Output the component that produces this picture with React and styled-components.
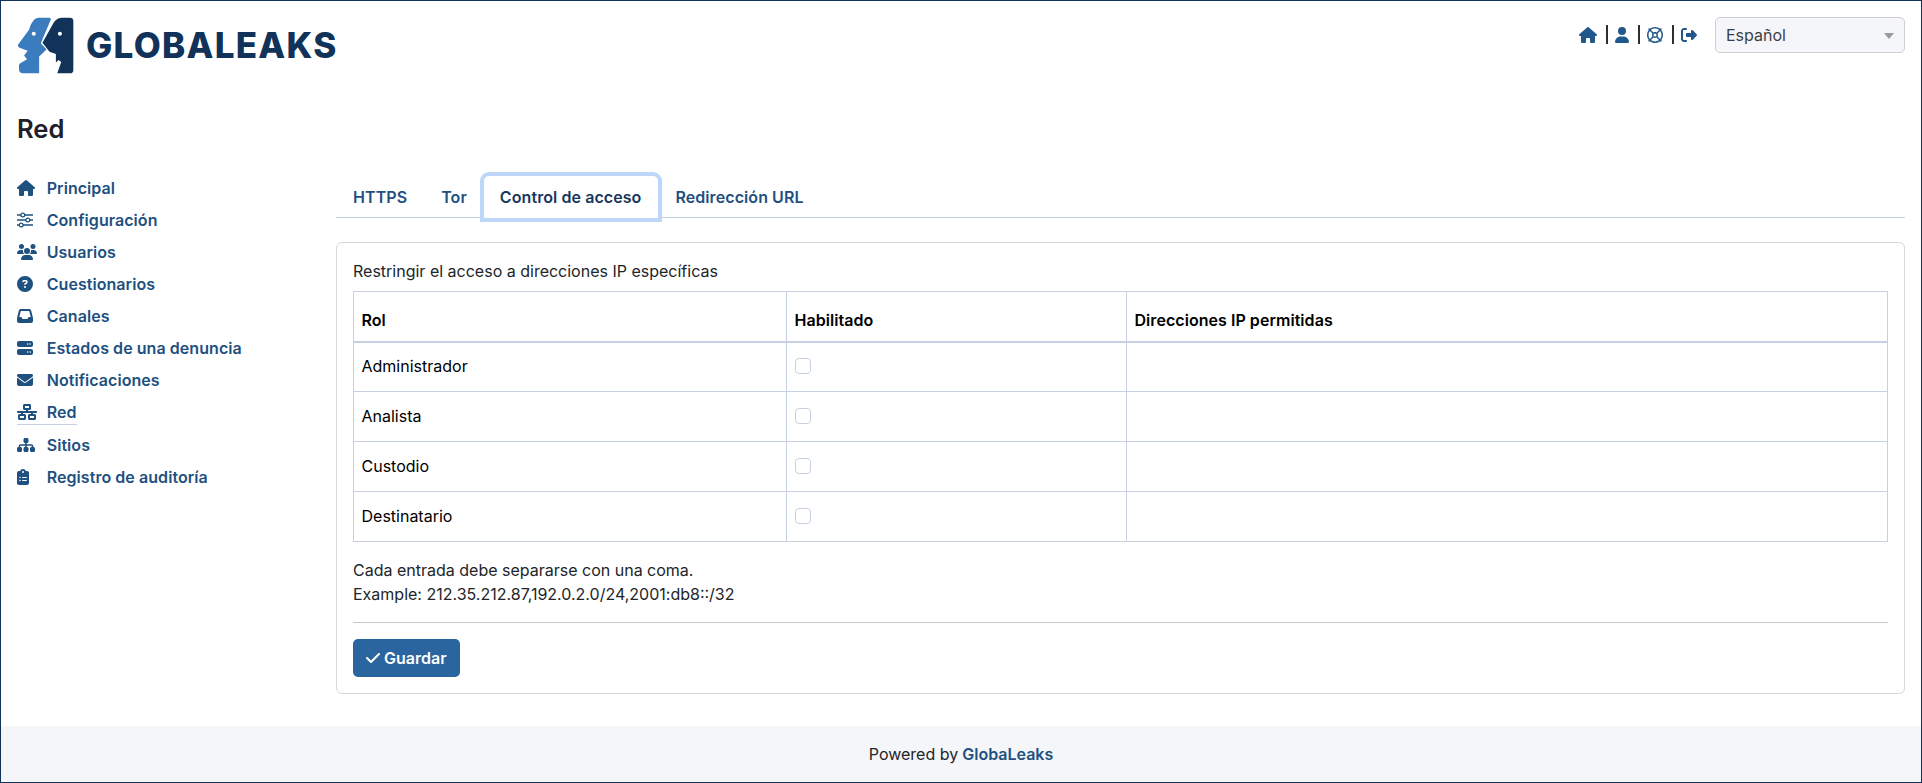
import React from "react";
import styled, { createGlobalStyle } from "styled-components";
import {
  FaHouse,
  FaUser,
  FaRegLifeRing,
  FaRightFromBracket,
  FaUsers,
  FaCircleQuestion,
  FaInbox,
  FaServer,
  FaEnvelope,
  FaNetworkWired,
  FaSitemap,
  FaClipboardList,
  FaCheck,
} from "react-icons/fa6";

const linkColor = "#1e5080";
const lineColor = "#c7d0e2";

function SlidersIcon() {
  return (
    <svg viewBox="0 0 16 16" fill="none" stroke="currentColor">
      <path strokeWidth="1.4" d="M0 3H16M0 8H16M0 13H16" />
      <circle cx="5.8" cy="3" r="1.9" fill="#fff" strokeWidth="1.2" />
      <circle cx="10.8" cy="8" r="1.9" fill="#fff" strokeWidth="1.2" />
      <circle cx="4.2" cy="13" r="1.9" fill="#fff" strokeWidth="1.2" />
    </svg>
  );
}

const navItems = [
  { label: "Principal", icon: FaHouse, width: 18 },
  { label: "Configuración", icon: SlidersIcon, width: 16 },
  { label: "Usuarios", icon: FaUsers, width: 20 },
  { label: "Cuestionarios", icon: FaCircleQuestion, width: 16 },
  { label: "Canales", icon: FaInbox, width: 16 },
  { label: "Estados de una denuncia", icon: FaServer, width: 16 },
  { label: "Notificaciones", icon: FaEnvelope, width: 16 },
  { label: "Red", icon: FaNetworkWired, width: 20, active: true },
  { label: "Sitios", icon: FaSitemap, width: 18 },
  { label: "Registro de auditoría", icon: FaClipboardList, width: 12 },
];

const tabs = ["HTTPS", "Tor", "Control de acceso", "Redirección URL"];
const roles = ["Administrador", "Analista", "Custodio", "Destinatario"];

export default function App() {
  return (
    <Page>
      <GlobalStyle />
      <Header>
        <Brand>
          <Logo />
          <BrandName>GLOBALEAKS</BrandName>
        </Brand>
        <UserBar>
          <UserLink $w={18}><FaHouse /></UserLink>
          <UserLink $w={14}><FaUser /></UserLink>
          <UserLink $w={16}><FaRegLifeRing /></UserLink>
          <UserLink $w={16} $last><FaRightFromBracket /></UserLink>
          <SelectWrap>
            <LangSelect defaultValue="es">
              <option value="es">Español</option>
            </LangSelect>
            <Caret />
          </SelectWrap>
        </UserBar>
      </Header>

      <PageTitle>Red</PageTitle>

      <Body>
        <Sidebar>
          {navItems.map(({ label, icon: Icon, width, active }) => (
            <NavItem key={label}>
              <NavLink $active={active}>
                <NavIcon $w={width}><Icon /></NavIcon>
                {label}
              </NavLink>
            </NavItem>
          ))}
        </Sidebar>

        <Main>
          <Tabs>
            {tabs.map((t) => (
              <Tab key={t} $active={t === "Control de acceso"}>{t}</Tab>
            ))}
          </Tabs>

          <Card>
            <Intro>Restringir el acceso a direcciones IP específicas</Intro>
            <Table>
              <colgroup>
                <col style={{ width: 433 }} />
                <col style={{ width: 340 }} />
                <col />
              </colgroup>
              <thead>
                <tr>
                  <Th>Rol</Th>
                  <Th>Habilitado</Th>
                  <Th>Direcciones IP permitidas</Th>
                </tr>
              </thead>
              <tbody>
                {roles.map((r) => (
                  <tr key={r}>
                    <Td>{r}</Td>
                    <Td><Check type="checkbox" /></Td>
                    <Td />
                  </tr>
                ))}
              </tbody>
            </Table>
            <Help>
              Cada entrada debe separarse con una coma.
              <br />
              Example: 212.35.212.87,192.0.2.0/24,2001:db8::/32
            </Help>
            <Rule />
            <SaveButton>
              <FaCheck />
              Guardar
            </SaveButton>
          </Card>
        </Main>
      </Body>

      <Footer>
        Powered by <FooterLink>GlobaLeaks</FooterLink>
      </Footer>
    </Page>
  );
}

function Logo() {
  return (
    <svg width="57" height="57" viewBox="50 50 170 170">
      <path
        fill="#3a7cbd"
        d="M112 52 H146 Q153 52 150 60 L121 128 L138 147 L116 168 V218 H68 Q56 218 56 206 V194 Q56 189 61 187 L80 176 L71 165 L82 151 L58 142 Q50 137 54 131 L86 88 Q94 56 112 52 Z"
      />
      <path
        fill="#11335a"
        d="M186 52 H208 Q218 52 218 62 V208 Q218 218 208 218 H170 L182 184 L174 178 L166 186 L166 160 L147 154 L126 127 L160 66 Q168 52 186 52 Z"
      />
      <circle cx="100" cy="100" r="6" fill="#fff" />
      <circle cx="178" cy="100" r="6" fill="#fff" />
    </svg>
  );
}

const GlobalStyle = createGlobalStyle`
  html, body {
    margin: 0;
    padding: 0;
    background: #fff;
  }
  body {
    font-family: Inter, "Liberation Sans", sans-serif;
    font-size: 16px;
    line-height: 1.5;
    color: #212529;
  }
  * {
    box-sizing: border-box;
  }
`;

const Page = styled.div`
  display: flex;
  flex-direction: column;
  height: 783px;
  border: 1px solid #11335a;
  overflow: hidden;
`;

const Header = styled.header`
  display: flex;
  justify-content: space-between;
  align-items: flex-start;
  padding: 16px 16px 0 16px;
  height: 110px;
`;

const Brand = styled.div`
  display: flex;
  align-items: center;
  gap: 12px;
`;

const BrandName = styled.span`
  font-size: 35px;
  font-weight: 800;
  line-height: 57px;
  letter-spacing: 1.25px;
  color: #11335a;
`;

const UserBar = styled.div`
  display: flex;
  align-items: center;
  height: 36px;
`;

const UserLink = styled.a`
  display: flex;
  align-items: center;
  height: 19px;
  padding: 0 9px 0 0;
  margin: -1px 7px 0 0;
  color: #22578b;
  border-right: ${(p) => (p.$last ? "none" : "2px solid #2b2f38")};

  svg {
    height: 16px;
    width: ${(p) => p.$w}px;
  }
`;

const SelectWrap = styled.div`
  position: relative;
  margin-left: 2px;
  width: 190px;
`;

const LangSelect = styled.select`
  appearance: none;
  display: block;
  width: 100%;
  height: 36px;
  padding: 0 10px;
  font-family: inherit;
  font-size: 16px;
  color: #3b3f46;
  background: #f5f6fa;
  border: 1px solid #cfcfcf;
  border-radius: 5px;
`;

const Caret = styled.span`
  position: absolute;
  right: 11px;
  top: 16px;
  border-left: 5px solid transparent;
  border-right: 5px solid transparent;
  border-top: 6px solid #9a9a9a;
`;

const PageTitle = styled.h1`
  margin: 0;
  padding: 0 16px;
  font-size: 25.6px;
  font-weight: 600;
  line-height: 36px;
  color: #1f2029;
  height: 61px;
`;

const Body = styled.div`
  display: flex;
  flex: 1;
  padding: 0 16px;
`;

const Sidebar = styled.ul`
  list-style: none;
  margin: 0;
  padding: 0;
  width: 319px;
  flex-shrink: 0;
`;

const NavItem = styled.li`
  display: flex;
  padding: 4px 0;
`;

const NavLink = styled.a`
  display: inline-flex;
  align-items: center;
  font-size: 16px;
  font-weight: 600;
  line-height: 24px;
  letter-spacing: 0.06px;
  color: ${linkColor};
  border-bottom: ${(p) => (p.$active ? `1px solid ${lineColor}` : "none")};
`;

const NavIcon = styled.span`
  display: inline-flex;
  width: 29.7px;

  svg {
    height: 16px;
    width: ${(p) => p.$w}px;
  }
`;

const Main = styled.main`
  flex: 1;
  min-width: 0;
  padding-top: 4px;
`;

const Tabs = styled.nav`
  display: flex;
  height: 42px;
  border-bottom: 1px solid ${lineColor};
`;

const Tab = styled.a`
  display: flex;
  align-items: center;
  height: 42px;
  padding: ${(p) => (p.$active ? "0 17px 0 16px" : "0 17px")};
  font-size: 16px;
  font-weight: 600;
  letter-spacing: 0.08px;
  position: relative;
  color: ${(p) => (p.$active ? "#17375e" : linkColor)};
  ${(p) =>
    p.$active &&
    `
    background: #fff;
    border-radius: 5px 5px 0 0;
    box-shadow: 0 0 0 4px #bfd6fb;
    z-index: 1;
  `}
`;

const Card = styled.section`
  margin-top: 24px;
  padding: 16px;
  border: 1px solid #d5d7db;
  border-radius: 6px;
  display: flex;
  flex-direction: column;
  align-items: flex-start;
`;

const Intro = styled.p`
  margin: 0 0 8px 0;
  line-height: 24px;
`;

const Table = styled.table`
  width: 100%;
  table-layout: fixed;
  border-collapse: collapse;
  color: #000;
`;

const Th = styled.th`
  height: 50px;
  padding: 0 8px 9px 7.5px;
  text-align: left;
  vertical-align: bottom;
  font-weight: 600;
  letter-spacing: 0.05px;
  border: 1px solid ${lineColor};
  border-bottom: 2px solid ${lineColor};
`;

const Td = styled.td`
  height: 50px;
  padding: 0 8px 2px 7.5px;
  border: 1px solid ${lineColor};
  vertical-align: middle;
`;

const Check = styled.input`
  appearance: none;
  display: block;
  width: 16px;
  height: 16px;
  margin: 0;
  border: 1px solid ${lineColor};
  border-radius: 4px;
  background: #fff;
`;

const Help = styled.p`
  margin: 16px 0 0 0;
  line-height: 24px;
`;

const Rule = styled.hr`
  align-self: stretch;
  margin: 16px 0;
  border: 0;
  border-top: 1px solid #c9cacc;
`;

const SaveButton = styled.button`
  display: inline-flex;
  align-items: center;
  gap: 4px;
  height: 38px;
  padding: 0 13px;
  font-family: inherit;
  font-size: 16px;
  font-weight: 600;
  color: #fff;
  background: #2a659f;
  border: 0;
  border-radius: 5px;

  svg {
    height: 16px;
    width: 14px;
  }
`;

const Footer = styled.footer`
  height: 56px;
  flex-shrink: 0;
  display: flex;
  align-items: center;
  justify-content: center;
  gap: 4px;
  background: #f5f6fa;
`;

const FooterLink = styled.a`
  font-weight: 600;
  color: ${linkColor};
`;
